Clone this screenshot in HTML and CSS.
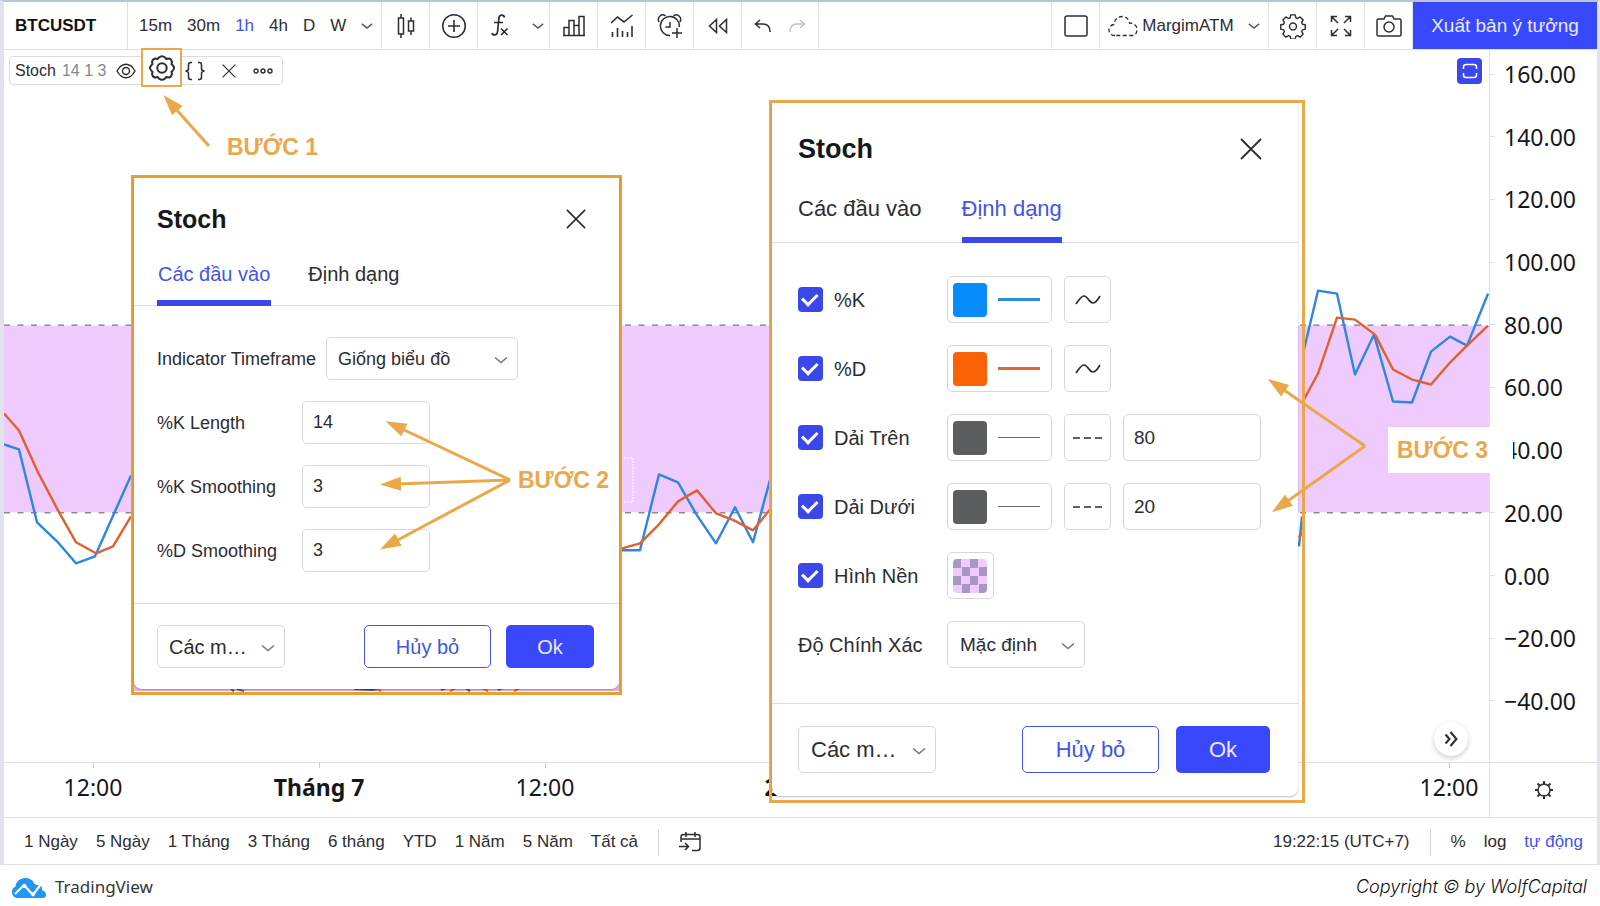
FILE: index.html
```html
<!DOCTYPE html>
<html lang="vi">
<head>
<meta charset="utf-8">
<title>BTCUSDT – Stoch</title>
<link rel="stylesheet" href="styles.css">
</head>
<body>
<svg class="sprite" aria-hidden="true">
  <symbol id="chev" viewBox="0 0 14 8"><path d="M1 1.5l6 5 6-5" fill="none" stroke="currentColor" stroke-width="1.6"/></symbol>
  <symbol id="cross" viewBox="0 0 22 22"><path d="M1 1l20 20M21 1L1 21" fill="none" stroke="currentColor" stroke-width="1.8"/></symbol>
  <symbol id="wave" viewBox="0 0 26 12"><path d="M1 10C4 6 6 2 9 2c4 0 5 7 9 7 3 0 5-4 7-7" fill="none" stroke="currentColor" stroke-width="1.7"/></symbol>
  <symbol id="dash" viewBox="0 0 30 4"><path d="M0 2h7M11 2h7M22 2h7" fill="none" stroke="currentColor" stroke-width="1.6"/></symbol>
  <symbol id="gear" viewBox="0 0 28 28"><path d="M11.600 2h4.800l.7 3.100 1.900.8 2.700-1.700 3.300 3.300-1.600 2.700.8 1.900 3 .6v4.700l-3 .7-.8 1.900 1.600 2.700-3.300 3.300-2.700-1.700-1.900.8-.7 3h-4.800l-.6-3-1.900-.8-2.700 1.700-3.400-3.300 1.700-2.700-.8-1.900-3.100-.7v-4.700l3.100-.6.8-1.900L3.100 7.500l3.300-3.300 2.700 1.700 1.900-.8z" fill="none" stroke="currentColor" stroke-width="1.500" stroke-linejoin="round"/><circle cx="14" cy="14.500" r="3.700" fill="none" stroke="currentColor" stroke-width="1.500"/></symbol>
</svg>

<div class="page">
  <main class="app">
    <header class="toolbar">
      <button class="cell symbol">BTCUSDT</button>
      <div class="cell intervals">
        <button>15m</button><button>30m</button><button class="active">1h</button><button>4h</button><button>D</button><button>W</button>
        <button aria-label="Thêm khung thời gian"><svg class="chev"><use href="#chev"/></svg></button>
      </div>
      <button class="cell icon" aria-label="Nến"><svg width="20" height="26" viewBox="0 0 20 26"><path d="M2.500 5h5v16h-5zM5 1v4M5 21v4M12.500 8h5v10h-5zM15 4.500V8M15 18v4" fill="none" stroke="currentColor" stroke-width="1.500"/></svg></button>
      <button class="cell icon" aria-label="So sánh"><svg width="26" height="26" viewBox="0 0 26 26"><path d="M13 7v12M7 13h12" stroke="currentColor" stroke-width="1.600"/><circle cx="13" cy="13" r="11.300" fill="none" stroke="currentColor" stroke-width="1.500"/></svg></button>
      <button class="cell fx" aria-label="Các chỉ báo"><svg width="20" height="26" viewBox="0 0 20 26"><path d="M14.500 4.500C14 1.500 9.500 1 9 5L7.500 19c-.5 4-5 3.500-5.500 1M4 9.500h9M11 15.500l6.500 6.500M17.500 15.500L11 22" fill="none" stroke="currentColor" stroke-width="1.700"/></svg><svg class="chev"><use href="#chev"/></svg></button>
      <button class="cell icon" aria-label="Tài chính"><svg width="24" height="22" viewBox="0 0 24 22"><path d="M2 20.500v-8h5v8M7 20.500v-15h5v15M12 20.500v-10h5M17 20.500v-19h5v19M1 20.500h22" fill="none" stroke="currentColor" stroke-width="1.500"/></svg></button>
      <button class="cell icon" aria-label="Mẫu chỉ báo"><svg width="24" height="24" viewBox="0 0 24 24"><path d="M1 9l6.500-6 6.500 5 8.500-7M2.500 23v-5M7.500 23v-9M12.500 23v-6M17.500 23v-5M22 23V12" fill="none" stroke="currentColor" stroke-width="1.600"/></svg></button>
      <button class="cell icon" aria-label="Cảnh báo"><svg width="26" height="26" viewBox="0 0 26 26"><path d="M13 22.500A9.500 9.500 0 1 1 22.300 14M13 9v5H8.500M20 15v10M15 20h10M2 9C-.5 4 5 0 8.500 3M23 9c2.500-5-3-9-6.500-6" fill="none" stroke="currentColor" stroke-width="1.500"/></svg></button>
      <button class="cell icon" aria-label="Phát lại"><svg width="20" height="16" viewBox="0 0 20 16"><path d="M8.500 1.500v13L1.500 8zM18.500 1.500v13L11.500 8z" fill="none" stroke="currentColor" stroke-width="1.500"/></svg></button>
      <div class="cell history">
        <button aria-label="Hoàn tác"><svg width="18" height="14" viewBox="0 0 18 14"><path d="M6 1L1.500 5 6 9M1.500 5H9c5 0 7 3 7 8" fill="none" stroke="currentColor" stroke-width="1.500"/></svg></button>
        <button class="off" aria-label="Làm lại"><svg width="18" height="14" viewBox="0 0 18 14"><path d="M12 1l4.500 4L12 9M16.500 5H9c-5 0-7 3-7 8" fill="none" stroke="currentColor" stroke-width="1.500"/></svg></button>
      </div>
      <div class="cell spacer"></div>
      <button class="cell icon" aria-label="Bố cục"><svg width="24" height="22" viewBox="0 0 24 22"><rect x="1" y="1" width="22" height="20" rx="2" fill="none" stroke="currentColor" stroke-width="1.500"/></svg></button>
      <button class="cell layout"><svg width="30" height="22" viewBox="0 0 30 22"><path d="M7 20.500a5.500 5.500 0 0 1-1-11C7 3 11 1.500 14.500 1.500c4 0 6.500 3 7 6.500 4 0 7.500 2.500 7.500 6.500s-2 6-5 6z" fill="none" stroke="currentColor" stroke-width="1.300" stroke-dasharray="4 2.500"/></svg>MargimATM<svg class="chev"><use href="#chev"/></svg></button>
      <button class="cell icon" aria-label="Cài đặt"><svg width="26" height="26"><use href="#gear"/></svg></button>
      <button class="cell icon" aria-label="Toàn màn hình"><svg width="22" height="22" viewBox="0 0 22 22"><path d="M1.500 7V1.500H7M1.500 1.500L8 8M15 1.500h5.500V7M20.500 1.500L14 8M1.500 15v5.500H7M1.500 20.500L8 14M15 20.500h5.500V15M20.500 20.500L14 14" fill="none" stroke="currentColor" stroke-width="1.500"/></svg></button>
      <button class="cell icon" aria-label="Chụp ảnh"><svg width="26" height="22" viewBox="0 0 26 22"><path d="M8 4l1.500-3h7L18 4h5.500c1 0 1.500.5 1.500 1.500v14c0 1-.5 1.500-1.500 1.500h-21C1.500 21 1 20.500 1 19.500v-14C1 4.500 1.500 4 2.500 4z" fill="none" stroke="currentColor" stroke-width="1.500"/><circle cx="13" cy="12" r="5" fill="none" stroke="currentColor" stroke-width="1.500"/></svg></button>
      <button class="publish">Xuất bản ý tưởng</button>
    </header>

    <section class="chart">
      <div class="pane">
        <svg class="plot" viewBox="4 50 1485 713" preserveAspectRatio="none">
          <rect x="4" y="326" width="1485" height="187" fill="#efcbfd"/>
          <path d="M4 325.500h1485M4 513.500h1485" stroke="#555" stroke-dasharray="6 7.500"/>
          <g fill="none" stroke-width="2.400" stroke-linejoin="round">
            <path stroke="#2f86e0" d="M4 445l15 5 18 73 20 19 19 22 19-7 36-81M615 551h25l19-76 19 8 19 33 19 28 19-36 18 35 18-66M1304 350l14-59 19 3 18 81 19-40 19 67 19 1 19-51 19-15 17 9 21-52M1299 547l3-30"/>
            <path stroke="#e0602f" d="M4 414l15 17 19 42 20 38 18 32 20 11 17-7 18-30M615 551l25-7 19-19 19-23 19-11 19 23 18 7 19 10 18-22M1304 400l14-26 19-56 18 2 20 15 18 35 19 10 19 5 19-22 17-17 21-20M1299 538l4-5"/>
          </g>
          <rect x="134" y="685" width="486" height="7" fill="#e6b6dc"/>
          <path d="M231 690l3 2m3-2l7 2M354 690l18 1 6-1M441 691l5-2M466 689l4 3M498 691l5-2" stroke="#2c5f8f" stroke-width="2" fill="none"/>
          <path d="M376 689l5 3M450 692l6-3M482 689l6 3M514 692l6-3" stroke="#e0602f" stroke-width="2" fill="none"/>
        </svg>
        <div class="legend">
          <span class="name">Stoch</span><span class="args">14 1 3</span>
          <button class="eye" aria-label="Ẩn"><svg width="20" height="16" viewBox="0 0 20 16"><path d="M1 8C6-1 14-1 19 8 14 17 6 17 1 8z" fill="none" stroke="currentColor" stroke-width="1.400"/><circle cx="10" cy="8" r="3.500" fill="none" stroke="currentColor" stroke-width="1.400"/></svg></button>
          <button class="marked" aria-label="Cài đặt chỉ báo"><svg width="28" height="28" viewBox="0 0 28 28"><path d="M11 3.500Q14 1 17 3.500L18.500 5Q23 3.500 24 8l-.5 2Q28.500 14 23.500 18l.5 2q-1 4.500-5.500 3L17 24.500Q14 27 11 24.500L9.500 23Q5 24.500 4 20l.5-2Q-.5 14 4.500 10L4 8q1-4.500 5.500-3z" fill="none" stroke="currentColor" stroke-width="2"/><circle cx="14" cy="14" r="4.700" fill="none" stroke="currentColor" stroke-width="2"/></svg></button>
          <button aria-label="Mã nguồn"><svg width="22" height="20" viewBox="0 0 22 20"><path d="M8 1.500H6.500c-2 0-2 1-2 2.500v3.500c0 1.500-.8 2.500-3 2.500 2.200 0 3 1 3 2.500V16c0 1.500 0 2.500 2 2.500H8M14 1.500h1.500c2 0 2 1 2 2.500v3.500c0 1.500.8 2.500 3 2.500-2.200 0-3 1-3 2.500V16c0 1.500 0 2.500-2 2.500H14" fill="none" stroke="currentColor" stroke-width="1.500"/></svg></button>
          <button class="remove" aria-label="Xóa"><svg width="14" height="14"><use href="#cross"/></svg></button>
          <button aria-label="Thêm"><svg width="20" height="6" viewBox="0 0 20 6"><g fill="none" stroke="currentColor" stroke-width="1.400"><circle cx="3" cy="3" r="2"/><circle cx="10" cy="3" r="2"/><circle cx="17" cy="3" r="2"/></g></svg></button>
        </div>
        <button class="fit" aria-label="Thu phóng"><svg width="16" height="16" viewBox="0 0 16 16"><path d="M1.500 6V4q0-2.500 2.500-2.500h8Q14.500 1.500 14.500 4v2M1.500 10v2q0 2.500 2.500 2.500h8q2.500 0 2.500-2.500v-2" fill="none" stroke="currentColor" stroke-width="1.500"/></svg></button>
        <button class="latest" aria-label="Đến thanh mới nhất"><svg width="14" height="16" viewBox="0 0 14 16"><path d="M1.500 3.500L5.500 8l-4 4.500M6.500 1l6 7-6 7" fill="none" stroke="currentColor" stroke-width="2"/></svg></button>
      </div>
      <div class="prices">
        <span>160.00</span><span>140.00</span><span>120.00</span><span>100.00</span><span>80.00</span><span>60.00</span><span>40.00</span><span>20.00</span><span>0.00</span><span>−20.00</span><span>−40.00</span>
      </div>
      <div class="times">
        <span>12:00</span><span class="major">Tháng 7</span><span>12:00</span><span class="major">2</span><span></span><span></span><span>12:00</span>
      </div>
      <button class="corner" aria-label="Cài đặt trục"><svg width="18" height="18" viewBox="0 0 18 18"><circle cx="9" cy="9" r="6" fill="none" stroke="currentColor" stroke-width="1.500"/><path d="M9 0v3M9 15v3M0 9h3M15 9h3M2.500 2.500l2 2M13.500 13.500l2 2M15.500 2.500l-2 2M4.500 13.500l-2 2" stroke="currentColor" stroke-width="2"/></svg></button>
    </section>

    <nav class="ranges">
      <button>1 Ngày</button><button>5 Ngày</button><button>1 Tháng</button><button>3 Tháng</button><button>6 tháng</button><button>YTD</button><button>1 Năm</button><button>5 Năm</button><button>Tất cả</button>
      <i class="rule"></i>
      <button class="goto" aria-label="Đi đến ngày"><svg width="22" height="20" viewBox="0 0 22 20"><path d="M2 10V5q0-2.500 2.500-2.500h14Q21 2.500 21 5v11q0 2.500-2.500 2.500H13M2 7h19M7 0v5M16 0v5M0 14.500h9M6 11l3.500 3.500L6 18" fill="none" stroke="currentColor" stroke-width="1.500"/></svg></button>
      <span class="clock">19:22:15 (UTC+7)</span>
      <i class="rule"></i>
      <button>%</button><button>log</button><button class="active">tự động</button>
    </nav>
  </main>

  <footer class="credits">
    <a class="brand" href="#"><svg width="34" height="20" viewBox="0 0 34 20"><path d="M6 20a6 6 0 0 1-2.500-11.500C4 4 8 0 13 0c5 0 8 2.500 9.500 6l2.500 1 4 0 1.500 5.500Q34 14 34 17q0 3-3.500 3z" fill="#2196f3"/><path d="M3 16l9-9 9 10L29 6" fill="none" stroke="#fff" stroke-width="2.200"/><circle cx="12.500" cy="8" r="2" fill="#fff"/><circle cx="21" cy="16" r="2" fill="#fff"/></svg>TradingView</a>
    <span class="copy">Copyright © by WolfCapital</span>
  </footer>

  <div class="frame inputs">
    <form class="panel">
      <div class="head"><h2>Stoch</h2><button type="button" aria-label="Đóng"><svg width="20" height="20"><use href="#cross"/></svg></button></div>
      <div class="tabs"><button type="button" class="on">Các đầu vào</button><button type="button">Định dạng</button></div>
      <div class="rows">
        <div class="row"><label for="tf">Indicator Timeframe</label><span class="pick wide"><select id="tf"><option>Giống biểu đồ</option></select><svg class="chev"><use href="#chev"/></svg></span></div>
        <div class="row"><label for="kl">%K Length</label><input id="kl" type="text" value="14"></div>
        <div class="row"><label for="ks">%K Smoothing</label><input id="ks" type="text" value="3"></div>
        <div class="row"><label for="ds">%D Smoothing</label><input id="ds" type="text" value="3"></div>
      </div>
      <div class="foot"><span class="pick"><select aria-label="Các mặc định"><option>Các m…</option></select><svg class="chev"><use href="#chev"/></svg></span><button type="button" class="cancel">Hủy bỏ</button><button type="button" class="ok">Ok</button></div>
    </form>
  </div>

  <div class="frame style">
    <form class="panel">
      <div class="head"><h2>Stoch</h2><button type="button" aria-label="Đóng"><svg width="22" height="22"><use href="#cross"/></svg></button></div>
      <div class="tabs"><button type="button">Các đầu vào</button><button type="button" class="on">Định dạng</button></div>
      <div class="rows">
        <div class="row"><label><input type="checkbox" checked>%K</label><button type="button" class="color k" aria-label="Màu %K"><i></i><b></b></button><button type="button" class="kind" aria-label="Kiểu %K"><svg width="26" height="12"><use href="#wave"/></svg></button></div>
        <div class="row"><label><input type="checkbox" checked>%D</label><button type="button" class="color d" aria-label="Màu %D"><i></i><b></b></button><button type="button" class="kind" aria-label="Kiểu %D"><svg width="26" height="12"><use href="#wave"/></svg></button></div>
        <div class="row"><label><input type="checkbox" checked>Dải Trên</label><button type="button" class="color" aria-label="Màu dải trên"><i></i><b></b></button><button type="button" class="kind" aria-label="Kiểu dải trên"><svg width="30" height="4"><use href="#dash"/></svg></button><input type="text" value="80" aria-label="Dải Trên"></div>
        <div class="row"><label><input type="checkbox" checked>Dải Dưới</label><button type="button" class="color" aria-label="Màu dải dưới"><i></i><b></b></button><button type="button" class="kind" aria-label="Kiểu dải dưới"><svg width="30" height="4"><use href="#dash"/></svg></button><input type="text" value="20" aria-label="Dải Dưới"></div>
        <div class="row"><label><input type="checkbox" checked>Hình Nền</label><button type="button" class="color fill" aria-label="Màu nền"><i></i></button></div>
        <div class="row"><label for="prec">Độ Chính Xác</label><span class="pick"><select id="prec"><option>Mặc định</option></select><svg class="chev"><use href="#chev"/></svg></span></div>
      </div>
      <div class="foot"><span class="pick"><select aria-label="Các mặc định"><option>Các m…</option></select><svg class="chev"><use href="#chev"/></svg></span><button type="button" class="cancel">Hủy bỏ</button><button type="button" class="ok">Ok</button></div>
    </form>
  </div>

  <svg class="arrows" width="1500" height="600" aria-hidden="true">
    <defs><marker id="tip" markerUnits="userSpaceOnUse" markerWidth="22" markerHeight="16" refX="5" refY="7" orient="auto"><path d="M0 0l21 7-21 7z" fill="#eba84a"/></marker></defs>
    <path d="M624 458h9v44h-9" fill="none" stroke="#fff" stroke-dasharray="2 1"/>
    <g stroke="#eba84a" stroke-width="3" fill="none">
      <path marker-end="url(#tip)" d="M209 146L174 107"/>
      <path marker-end="url(#tip)" d="M510 480L400 428"/>
      <path marker-end="url(#tip)" d="M510 480L396 484"/>
      <path marker-end="url(#tip)" d="M510 480L394 542"/>
      <path marker-end="url(#tip)" d="M1365 446L1281 388"/>
      <path marker-end="url(#tip)" d="M1365 446L1285 503"/>
    </g>
  </svg>
  <strong class="step one">BƯỚC 1</strong>
  <strong class="step two">BƯỚC 2</strong>
  <strong class="step three">BƯỚC 3</strong>
</div>
</body>
</html>
```
FILE: styles.css
```css
* { box-sizing: border-box; }
body { margin: 0; background: #fff; color: #2c2d32; font: 17px/20px "Liberation Sans", Arial, sans-serif; }
button, input, select { font: inherit; color: inherit; background: none; border: 0; margin: 0; padding: 0; }
button { display: flex; align-items: center; justify-content: center; white-space: nowrap; cursor: pointer; }
svg { display: block; flex: none; }
.sprite { position: absolute; width: 0; height: 0; }
.chev { width: 12px; height: 8px; color: #555; }
.page { position: relative; min-height: 100vh; display: flex; flex-direction: column; overflow: hidden; }

.app { flex: 1; display: flex; flex-direction: column; border: solid #e0e3eb; border-width: 2px 3px 0 4px; border-top-color: #b9c6d1; }
.active { color: #4255e8; }

.toolbar { display: flex; height: 48px; border-bottom: 1px solid #dfe1e6; }
.cell { border-right: 1px solid #dfe1e6; display: flex; align-items: center; }
.symbol { width: 124px; padding-left: 11px; justify-content: flex-start; font-weight: bold; color: #111; }
.intervals { width: 254px; padding-left: 11px; gap: 15px; }
.icon { width: 48px; }
.fx { width: 72px; gap: 22px; padding-left: 6px; }
.history { width: 77px; gap: 16px; justify-content: center; }
.off { color: #c5c5c8; }
.spacer { flex: 1; }
.layout { width: 169px; gap: 4px; }
.layout .chev { margin-left: 10px; }
.publish { width: 184px; background: #3a48fb; color: #e8eaff; font-size: 19px; }

.chart { flex: 1; display: grid; grid-template: 1fr 54px / 1fr 108px; }
.pane { position: relative; border-bottom: 1px solid #dfe1e6; min-height: 0; }
.plot { position: absolute; width: 100%; height: 100%; }
.legend { position: absolute; left: 5px; top: 6px; height: 29px; width: 274px; display: flex; align-items: center; padding-left: 5px; border: 1px solid #d9dbe2; border-radius: 4px; font-size: 16px; background: #fff; }
.legend .args { color: #85868c; margin-left: 6px; }
.legend .eye { margin-left: 10px; }
.legend .marked { width: 41px; height: 39px; margin: -6px 2px 0 5px; background: #fff; border: 2px solid #eba84a; }
.legend .remove { margin: 0 17px 0 16px; }
.fit { position: absolute; right: 7px; top: 8px; width: 25px; height: 26px; border-radius: 4px; background: #3a48eb; color: #fff; }
.latest { position: absolute; right: 21px; bottom: 6px; width: 34px; height: 34px; border-radius: 50%; background: #fff; box-shadow: 0 2px 5px #0003; }
.prices { display: flex; flex-direction: column; justify-content: space-between; padding: 9px 0 46px; border: solid #dfe1e6; border-width: 0 0 1px 1px; font: 23px/30px "Noto Sans", sans-serif; color: #16171b; }
.prices span { display: flex; align-items: center; gap: 9px; }
.prices span::before { content: ""; width: 5px; height: 1px; background: #dfe1e6; }
.times { display: grid; grid-template-columns: repeat(7, 226px); overflow: hidden; text-align: center; font: 23px/48px "Noto Sans", sans-serif; color: #16171b; min-width: 0; margin-left: -1px; }
.times span { position: relative; left: -23px; }
.times span::before { content: ""; position: absolute; left: 50%; width: 1px; height: 5px; background: #c9cbd2; }
.times .major { font-weight: bold; }
.corner { border-left: 1px solid #dfe1e6; }

.ranges { display: flex; align-items: center; height: 48px; padding: 2px 14px 0 20px; gap: 18px; border: solid #dfe1e6; border-width: 1px 0; }
.ranges .rule { width: 1px; height: 27px; margin: 0 2px; background: #d5d7de; }
.clock { margin-left: auto; }

.credits { display: flex; height: 41px; padding: 2px 13px 0 12px; align-items: center; justify-content: space-between; }
.brand { display: flex; gap: 9px; align-items: center; color: #33343a; text-decoration: none; font: 17px/24px "Noto Sans", sans-serif; }
.brand svg { margin-top: 3px; }
.copy { font: italic 300 18px/24px Inter, sans-serif; color: #111; }

.frame { position: absolute; border: 3px solid #e99f35; }
.panel { background: #fff; border-radius: 0 0 8px 8px; display: flex; flex-direction: column; box-shadow: 0 1px 2px #0004; }
.head { display: flex; justify-content: space-between; align-items: center; }
.head h2 { margin: 0; color: #16171b; }
.tabs { display: flex; align-items: stretch; border-bottom: 1px solid #dcdee3; }
.tabs .on { color: #4255e8; border-bottom-color: #3a48eb; }
.tabs button { border-bottom: 6px solid transparent; margin-bottom: -1px; }
.row, .foot { display: flex; align-items: center; }
.foot { border-top: 1px solid #dcdee3; }
.panel input[type="text"], .pick select, .color, .kind { border: 1px solid #d6d8de; border-radius: 5px; background: #fff; }
.pick { position: relative; display: flex; }
.pick select { appearance: none; width: 100%; height: 100%; }
.pick .chev { position: absolute; right: 10px; top: 50%; width: 14px; margin-top: -3px; color: #77787d; pointer-events: none; }
.cancel { border: 1px solid #4255e8; border-radius: 5px; color: #4255e8; margin-left: auto; }
.ok { border-radius: 5px; background: #3a48fb; color: #e8eaff; }

.inputs { left: 131px; top: 175px; width: 491px; height: 520px; font-size: 18px; }
.inputs .head { height: 82px; padding: 0 33px 0 23px; }
.inputs h2 { font-size: 25px; line-height: 30px; }
.inputs .tabs { height: 46px; padding-left: 23px; gap: 36px; font-size: 20px; }
.inputs .tabs button { padding: 0 1px 12px; }
.inputs .rows { display: grid; gap: 21px; padding: 31px 0 31px 23px; }
.inputs .row { gap: 10px; }
.inputs .row label { min-width: 135px; }
.inputs .row input { width: 128px; height: 43px; padding-left: 10px; }
.inputs .pick { width: 128px; height: 43px; }
.inputs .wide { width: 192px; }
.inputs .pick select { padding-left: 11px; }
.inputs .foot { padding: 21px 25px 21px 23px; font-size: 20px; }
.inputs .cancel { width: 127px; height: 43px; }
.inputs .ok { width: 88px; height: 43px; margin-left: 15px; }

.style { left: 769px; top: 100px; width: 536px; height: 703px; border-color: #eba84a; font-size: 19px; }
.style .panel { margin-right: 4px; }
.style .head { height: 92px; padding: 0 36px 0 26px; }
.style h2 { font-size: 27px; line-height: 32px; }
.style .tabs { height: 48px; padding-left: 26px; gap: 40px; font-size: 22px; }
.style .tabs button { padding-bottom: 14px; }
.style .rows { display: grid; gap: 22px; padding: 33px 0 35px 26px; }
.style .row { gap: 12px; }
.style .row label { width: 137px; display: flex; align-items: center; gap: 11px; font-size: 20px; white-space: nowrap; }
.style input[type="checkbox"] { appearance: none; width: 25px; height: 25px; border-radius: 4px; background: #3a48eb; display: grid; place-items: center; }
.style input[type="checkbox"]::before { content: ""; width: 12px; height: 7px; border: solid #fff; border-width: 0 0 3px 3px; transform: rotate(-45deg) translate(1px, -2px); }
.style .row input[type="text"] { width: 138px; height: 47px; padding-left: 10px; }
.color { width: 105px; height: 47px; padding-left: 5px; gap: 11px; justify-content: flex-start; }
.color i { width: 34px; height: 34px; border-radius: 4px; background: #5c5d5f; }
.color b { width: 42px; height: 1px; background: #6c6d70; }
.k i { background: #078bfd; }
.k b { height: 3px; background: #2c8bdb; }
.d i { background: #fb6205; }
.d b { height: 3px; background: #e0652f; }
.fill { width: 47px; }
.fill i { background: conic-gradient(#efcbfd 25%, #a996c9 0 50%, #efcbfd 0 75%, #a996c9 0) 0 0 / 17px 17px; }
.kind { width: 47px; height: 47px; }
.style .pick { width: 138px; height: 47px; }
.style .pick select { padding-left: 12px; }
.style .foot { padding: 22px 28px 23px 26px; font-size: 22px; }
.style .cancel { width: 137px; height: 47px; }
.style .ok { width: 94px; height: 47px; margin-left: 17px; }

.arrows { position: absolute; left: 0; top: 0; pointer-events: none; }
.step { position: absolute; color: #eba84a; font-size: 23px; line-height: 26px; }
.one { left: 227px; top: 134px; }
.two { left: 518px; top: 467px; }
.three { left: 1388px; top: 427px; width: 125px; padding: 10px 9px; background: #fff; }
```
